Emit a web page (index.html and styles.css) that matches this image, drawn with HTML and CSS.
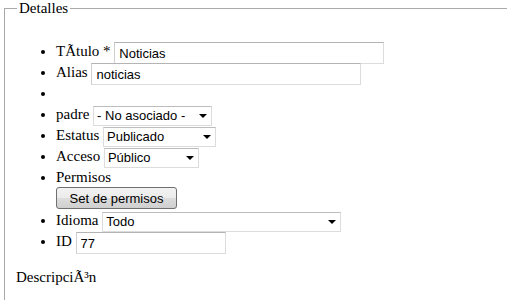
FILE: index.html
```html
<!DOCTYPE html>
<html lang="es">

<head>
  <meta charset="UTF-8">
  <title>Detalles</title>
  <link rel="stylesheet" href="styles.css">
</head>

<body>
  <fieldset class="details">
    <legend>Detalles</legend>
    <ul class="field-list">
      <li>
        <label for="title">TÃtulo *</label>
        <input id="title" class="text-input wide" type="text" value="Noticias">
      </li>
      <li>
        <label for="alias">Alias</label>
        <input id="alias" class="text-input wide" type="text" value="noticias">
      </li>
      <li></li>
      <li>
        <label for="parent">padre</label>
        <span class="select-box parent">
          <select id="parent"><option>- No asociado -</option></select>
        </span>
      </li>
      <li>
        <label for="state">Estatus</label>
        <span class="select-box state">
          <select id="state"><option>Publicado</option></select>
        </span>
      </li>
      <li>
        <label for="access">Acceso</label>
        <span class="select-box access">
          <select id="access"><option>Público</option></select>
        </span>
      </li>
      <li class="perm-item">
        <label>Permisos</label>
        <div class="perm-row">
          <button type="button" class="btn">Set de permisos</button>
        </div>
      </li>
      <li>
        <label for="language">Idioma</label>
        <span class="select-box language">
          <select id="language"><option>Todo</option></select>
        </span>
      </li>
      <li>
        <label for="id">ID</label>
        <input id="id" class="text-input short" type="text" value="77">
      </li>
    </ul>
    <p class="desc-label">DescripciÃ³n</p>
  </fieldset>
</body>

</html>
```

FILE: styles.css
```css
html,
body {
  margin: 0;
  padding: 0;
  overflow: hidden;
  background: #fff;
}

body {
  font-family: 'Liberation Serif', 'Times New Roman', serif;
  font-size: 15px;
  color: #000;
  width: 507px;
  height: 300px;
}

.details {
  margin: 0 0 0 4px;
  width: 560px;
  padding: 4px 11px 40px 11px;
  border: 1px solid #a9a9a9;
  border-right: 0;
}

.details legend {
  padding: 0 2px;
  margin-left: 1px;
  line-height: 17px;
}

.field-list {
  margin: 20px 0 16px;
  padding-left: 40px;
}

.field-list li {
  line-height: 21px;
  height: 21px;
}

.field-list li.perm-item {
  height: auto;
  line-height: 20px;
}

.text-input {
  font-family: 'Liberation Sans', Arial, sans-serif;
  font-size: 13px;
  color: #000;
  height: 22px;
  box-sizing: border-box;
  padding: 1px 4px 0;
  border: 1px solid #dcdcdc;
  border-top-color: #b4b4b4;
  border-left-color: #cfcfcf;
  background: #fff;
  vertical-align: middle;
  margin: 0;
}

.text-input.wide {
  width: 270px;
}

.text-input.short {
  width: 150px;
}

.select-box {
  position: relative;
  display: inline-block;
  vertical-align: middle;
  height: 20px;
}

.select-box select {
  appearance: none;
  -webkit-appearance: none;
  font-family: 'Liberation Sans', Arial, sans-serif;
  font-size: 13px;
  color: #000;
  width: 100%;
  height: 20px;
  box-sizing: border-box;
  padding: 0 18px 0 3px;
  margin: 0;
  border: 1px solid #dcdcdc;
  border-top-color: #bdbdbd;
  border-radius: 0;
  background: #fff;
  display: block;
}

.select-box::after {
  content: '';
  position: absolute;
  right: 5px;
  top: 8px;
  border-left: 4px solid transparent;
  border-right: 4px solid transparent;
  border-top: 4px solid #000;
  pointer-events: none;
}

.select-box.parent {
  width: 119px;
}

.select-box.state {
  width: 113px;
}

.select-box.access {
  width: 95px;
}

.select-box.language {
  width: 239px;
}

.perm-row {
  height: 23px;
}

.btn {
  display: block;
  font-family: 'Liberation Sans', Arial, sans-serif;
  font-size: 13px;
  color: #000;
  width: 121px;
  height: 22px;
  margin: 0;
  padding: 0;
  border: 1px solid #707070;
  border-radius: 3px;
  background: linear-gradient(#f2f2f2 0%, #ebebeb 50%, #dddddd 51%, #cfcfcf 100%);
}

.desc-label {
  margin: 0;
  line-height: 18px;
}
```
